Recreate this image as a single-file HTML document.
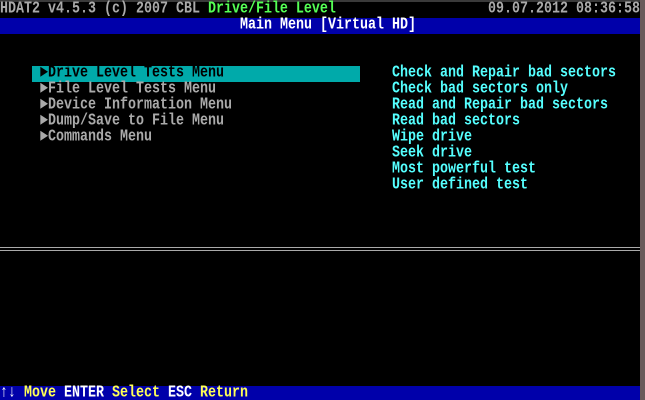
<!DOCTYPE html>
<html><head><meta charset="utf-8"><style>
html,body{margin:0;padding:0;background:#000;}
#s{position:relative;width:645px;height:400px;overflow:hidden;background:#000;font-family:"Liberation Mono",monospace;font-size:13.33px;font-weight:bold;}
.r{position:absolute;height:16px;line-height:16px;white-space:pre;}
.t{display:inline-block;transform:scaleY(1.25);transform-origin:50% 50%;}
.bar{position:absolute;left:0;width:640px;height:16px;}
</style></head><body><div id="s">
<div style="position:absolute;left:0;top:0;width:645px;height:2px;background:#3a3a3a"></div>
<div style="position:absolute;left:640px;top:0;width:5px;height:400px;background:#6a5a5a"></div>
<div class="bar" style="top:18px;background:#0000aa"></div>
<div class="bar" style="top:386px;background:#0000aa;height:14px"></div>
<div style="position:absolute;left:32px;top:66px;width:328px;height:16px;background:#00aaaa"></div>
<div style="position:absolute;left:0;top:247px;width:640px;height:1px;background:#aaaaaa"></div>
<div style="position:absolute;left:0;top:250px;width:640px;height:1px;background:#aaaaaa"></div>

<div class="r" style="top:2px;left:0;color:#aaaaaa"><span class="t">HDAT2 v4.5.3 (c) 2007 CBL <span style="color:#55ff55">Drive/File Level</span></span></div>
<div class="r" style="top:2px;left:488px;color:#aaaaaa"><span class="t">09.07.2012 08:36:58</span></div>
<div class="r" style="top:18px;left:240px;color:#ffffff"><span class="t">Main Menu [Virtual HD]</span></div>

<div class="r" style="top:66px;left:40px;color:#000"><span class="t">►Drive Level Tests Menu</span></div>
<div class="r" style="top:82px;left:40px;color:#aaaaaa"><span class="t">►File Level Tests Menu</span></div>
<div class="r" style="top:98px;left:40px;color:#aaaaaa"><span class="t">►Device Information Menu</span></div>
<div class="r" style="top:114px;left:40px;color:#aaaaaa"><span class="t">►Dump/Save to File Menu</span></div>
<div class="r" style="top:130px;left:40px;color:#aaaaaa"><span class="t">►Commands Menu</span></div>

<div class="r" style="top:66px;left:392px;color:#55ffff"><span class="t">Check and Repair bad sectors</span></div>
<div class="r" style="top:82px;left:392px;color:#55ffff"><span class="t">Check bad sectors only</span></div>
<div class="r" style="top:98px;left:392px;color:#55ffff"><span class="t">Read and Repair bad sectors</span></div>
<div class="r" style="top:114px;left:392px;color:#55ffff"><span class="t">Read bad sectors</span></div>
<div class="r" style="top:130px;left:392px;color:#55ffff"><span class="t">Wipe drive</span></div>
<div class="r" style="top:146px;left:392px;color:#55ffff"><span class="t">Seek drive</span></div>
<div class="r" style="top:162px;left:392px;color:#55ffff"><span class="t">Most powerful test</span></div>
<div class="r" style="top:178px;left:392px;color:#55ffff"><span class="t">User defined test</span></div>

<div class="r" style="top:386px;left:0;color:#ffffff"><span class="t">↑↓ <span style="color:#ffff55">Move</span> ENTER <span style="color:#ffff55">Select</span> ESC <span style="color:#ffff55">Return</span></span></div>
</div></body></html>
